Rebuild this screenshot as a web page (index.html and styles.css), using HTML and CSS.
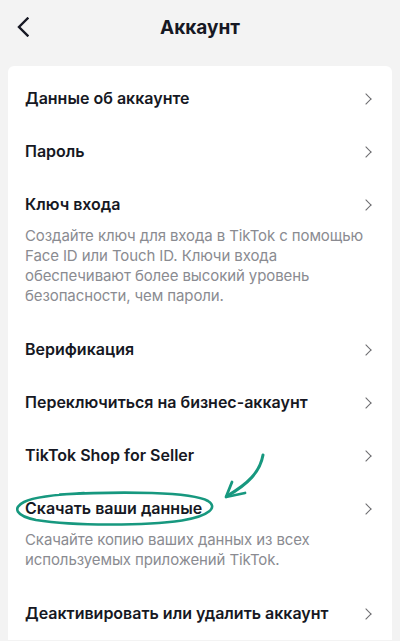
FILE: index.html
```html
<!DOCTYPE html>
<html lang="ru">
<head>
    <meta charset="UTF-8">
    <meta name="viewport" content="width=device-width, initial-scale=1.0">
    <title>Аккаунт</title>
    <link rel="stylesheet" href="styles.css">
</head>
<body>

    <!-- Top bar -->
    <header class="topbar">
        <button class="back-btn" aria-label="Назад">
            <svg width="12" height="20" viewBox="0 0 12 20">
                <path d="M10.5 1.5 L2 10 L10.5 18.5" fill="none" stroke="#161823" stroke-width="2.4" stroke-linecap="square"/>
            </svg>
        </button>
        <h1>Аккаунт</h1>
    </header>

    <!-- Settings list -->
    <main class="card">
        <div class="item">
            <div class="item-row"><span class="item-title">Данные об аккаунте</span><span class="chev"></span></div>
        </div>
        <div class="item">
            <div class="item-row"><span class="item-title">Пароль</span><span class="chev"></span></div>
        </div>
        <div class="item has-desc">
            <div class="item-row"><span class="item-title">Ключ входа</span><span class="chev"></span></div>
            <p class="item-desc">Создайте ключ для входа в TikTok с помощью Face ID или Touch ID. Ключи входа обеспечивают более высокий уровень безопасности, чем пароли.</p>
        </div>
        <div class="item">
            <div class="item-row"><span class="item-title">Верификация</span><span class="chev"></span></div>
        </div>
        <div class="item">
            <div class="item-row"><span class="item-title">Переключиться на бизнес-аккаунт</span><span class="chev"></span></div>
        </div>
        <div class="item">
            <div class="item-row"><span class="item-title">TikTok Shop for Seller</span><span class="chev"></span></div>
        </div>
        <div class="item has-desc">
            <div class="item-row"><span class="item-title">Скачать ваши данные</span><span class="chev"></span></div>
            <p class="item-desc">Скачайте копию ваших данных из всех используемых приложений TikTok.</p>

            <!-- hand-drawn annotation over the row -->
            <svg class="annotation" width="260" height="50" viewBox="0 0 260 50">
                <path d="M46 12.5 C 110 9, 178 10, 194 19 C 204 25, 196 34, 168 38.5 C 130 44, 60 44, 22 38 C 2 34, -2 26, 10 20 C 20 15, 40 12.5, 70 11"
                      fill="none" stroke="#17987f" stroke-width="2.6" stroke-linecap="round"/>
                <path d="M249 -27 C 246 -10, 234 2, 213 14" fill="none" stroke="#17987f" stroke-width="3" stroke-linecap="round"/>
                <path d="M212 15 L 218 0 M212 15 L 231 11" fill="none" stroke="#17987f" stroke-width="2.8" stroke-linecap="round"/>
            </svg>
        </div>
        <div class="item">
            <div class="item-row"><span class="item-title">Деактивировать или удалить аккаунт</span><span class="chev"></span></div>
        </div>
    </main>

</body>
</html>
```

FILE: styles.css
```css
/* General Styles */
* {
    margin: 0;
    padding: 0;
    box-sizing: border-box;
}

body {
    font-family: "Inter", "Roboto", sans-serif;
    background-color: #f3f3f3;
    color: #161823;
    padding: 0 8px;
}

/* Top bar */
.topbar {
    position: relative;
    height: 66px;
    display: flex;
    align-items: flex-start;
    justify-content: center;
    padding-top: 16px;
}

.topbar h1 {
    font-size: 19px;
    font-weight: 700;
    line-height: 24px;
}

.back-btn {
    position: absolute;
    left: 8px;
    top: 17px;
    border: none;
    background: none;
    width: 14px;
    height: 20px;
}

/* Card */
.card {
    background-color: #ffffff;
    border-radius: 6px 6px 0 0;
    padding: 6px 17px 0 17px;
}

.item {
    position: relative;
    padding: 16px 0;
}

.item.has-desc {
    padding-bottom: 17px;
}

.item-row {
    display: flex;
    justify-content: space-between;
    align-items: center;
    height: 21px;
}

.item-title {
    font-size: 16px;
    font-weight: 600;
    line-height: 21px;
}

.chev {
    width: 8px;
    height: 8px;
    border-top: 1.5px solid #6b6b6e;
    border-right: 1.5px solid #6b6b6e;
    transform: rotate(45deg);
    margin-right: 5px;
}

.item-desc {
    margin-top: 11px;
    font-size: 15px;
    line-height: 20px;
    letter-spacing: -0.1px;
    color: #8a8b91;
}

/* Annotation */
.annotation {
    position: absolute;
    left: -11px;
    top: 0;
    overflow: visible;
    pointer-events: none;
}
```
